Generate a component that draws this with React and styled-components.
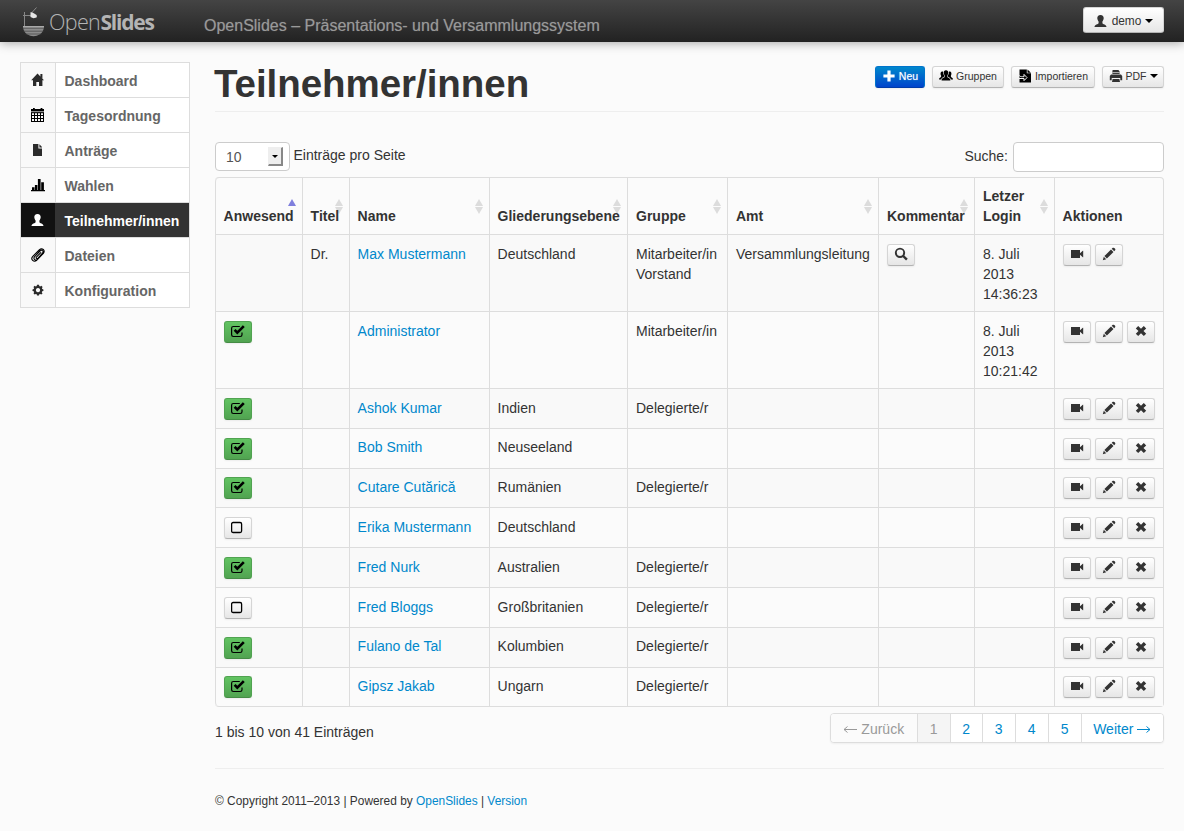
import React from "react";
import styled, { createGlobalStyle, css } from "styled-components";

const Global = createGlobalStyle`
  *, *::before, *::after { box-sizing: border-box; }
  body {
    margin: 0;
    background: #fbfbfb;
    color: #333;
    font: 14px/20px "Liberation Sans", Arial, sans-serif;
  }
  #root { overflow: hidden; height: 831px; }
`;

const Icon = styled.svg.attrs({ viewBox: "0 0 14 14" })`
  display: block;
  flex: none;
  width: 14px;
  height: 14px;
  fill: currentColor;
`;

const HomeIcon = () => (
  <Icon>
    <path d="M6.500 .4 13 7.300H11.400V13H8V9H5.300V13H2V7.300H.2Z M9.400 1h2v4.400l-2-2Z" />
  </Icon>
);
const CalendarIcon = () => (
  <Icon>
    <path fill="#000" d="M2 0h1.800v1h5.800V0h1.800v1H13v3.500H0V1h2Z" />
    <path fill="#ccc" d="M0 3h13v.7H0Z" />
    <path fill="#000" fillRule="evenodd" d="M0 4.200h13V14H0Z M1 5.200v1.900h2V5.200Z M4 5.200v1.900h2V5.200Z M7 5.200v1.900h2V5.200Z M10 5.200v1.900h2V5.200Z M1 8v2h2V8Z M4 8v2h2V8Z M7 8v2h2V8Z M10 8v2h2V8Z M1 11v2h2v-2Z M4 11v2h2v-2Z M7 11v2h2v-2Z M10 11v2h2v-2Z" />
  </Icon>
);
const FileIcon = () => (
  <Icon>
    <path d="M2 1h5.400v4.400H11V13H2Z M8.400 1.200 11 4v.4H8.400Z" />
  </Icon>
);
const ChartIcon = () => (
  <Icon>
    <path fill="#000" d="M0 12h14v1.200H0Z M1 9.200h2.500V12H1Z M3.900 7h2.500v5H3.900Z M6.900 1h2.700v11H6.900Z M10.200 4.200h2.700V12h-2.700Z" />
  </Icon>
);
const UserIcon = () => (
  <Icon>
    <path d="M6.500 1C8.700 1 9.800 2.300 9.700 4.200 9.600 5.600 9 6.700 8.400 7.500V9.200C8.700 10.300 12.500 10.400 12.500 13H.5C.5 10.400 4.300 10.300 4.600 9.200V7.500C4 6.700 3.400 5.600 3.300 4.200 3.200 2.300 4.300 1 6.500 1Z" />
  </Icon>
);
const ClipIcon = () => (
  <Icon>
    <path
      fill="none"
      stroke="#000"
      strokeWidth="1.100"
      strokeLinecap="round"
      d="M9.800 4.600 5.600 8.900c-1.200 1.300.2 2.400 1.400 1.200L11.500 5.200c1.600-2.200-.7-4-2.500-2.200L3.600 8.700c-1.800 2.200.9 4.600 3 2.600L12.400 5.300c2.400-3-1.300-6-4.200-3.300L1.800 8.300c-2.700 3.200 1 6.400 4 4"
    />
  </Icon>
);
const CogIcon = () => (
  <Icon>
    <path
      fillRule="evenodd"
      d="M6 1.800h2l.3 1.300.9.400 1.200-.7 1.200 1.300-.7 1.100.4.900 1.100.3v1.500l-1.200.4-.4.900.7 1.200-1.200 1.100-1.200-.6-.8.3-.3 1.200H6l-.3-1.200-.9-.3-1.200.6-1.100-1.200.6-1.100-.4-.9-1.200-.4V6.400l1.200-.3.4-.9-.6-1.100 1.100-1.300 1.200.7.9-.4Z M7 5a2.100 2.100 0 1 0 .010 0Z"
    />
  </Icon>
);
const PlusIcon = () => (
  <Icon>
    <path d="M5.400 1.400h3.200v4h4v3.200h-4v4H5.400v-4h-4V5.400h4Z" />
  </Icon>
);
const GroupIcon = () => (
  <Icon>
    <g fill="#000">
      <path d="M7 1.200c1.600 0 2.300 1 2.200 2.500C9.100 5 8.700 5.900 8.300 6.400v1.500c.3.900 3.100.9 3.100 3.600H2.600c0-2.700 2.800-2.700 3.100-3.600V6.400C5.300 5.900 4.900 5 4.800 3.700 4.700 2.200 5.400 1.200 7 1.200Z" />
      <path d="M3 2.500c.6-.2 1-.1 1.200.2 0 1.700.3 2.800 1 3.900v.9C4.700 8.300 2.400 8.400 2.200 10.400H0C0 8.500 1.900 8.400 2.100 7.700V6.600C1.500 5.900 1 3 3 2.500Z M11 2.500c-.6-.2-1-.1-1.200.2 0 1.700-.3 2.800-1 3.900v.9c.5.800 2.800.9 3 2.900H14c0-1.900-1.900-2-2.100-2.700V6.600C12.500 5.900 13 3 11 2.500Z" />
    </g>
  </Icon>
);
const ImportIcon = () => (
  <Icon>
    <path fill="#000" d="M1.500 .5h7.300V4.300H13V13.500H1.500Z M9.500.6 12.900 3.700H9.500Z" />
    <path
      fill="none"
      stroke="#f4f4f4"
      strokeWidth="1"
      d="M1 6.300C2 7.600 3 7.700 4.500 7.700H6V5.400L9 8.600 6 11.600V9.500H1"
    />
  </Icon>
);
const PrintIcon = () => (
  <Icon>
    <path d="M4 1h5.400L10.600 2.400V5H3.400V1.600Z M2 5.600h10l1.200 1.500V11.200H11.300V9H2.700v2.200H.8V7.100Z M3.600 10h6.800l.6 3H3Z" />
    <path stroke="#f4f4f4" strokeWidth=".7" d="M3.400 3.600h7.200" />
  </Icon>
);
const SearchIcon = () => (
  <Icon>
    <circle cx="6" cy="5.800" r="4.200" fill="none" stroke="currentColor" strokeWidth="1.900" />
    <path stroke="currentColor" strokeWidth="2.400" d="m8.700 8.500 4.200 4.200" />
  </Icon>
);
const VideoIcon = () => (
  <Icon>
    <path d="M1 3h9v8H1Z M10 6.200 12.800 3.700H13.200V10.300H12.800L10 7.800Z" />
  </Icon>
);
const PencilIcon = () => (
  <Icon>
    <path d="M.8 13.200 1.800 9.800 4.200 12.200Z M2.400 9.100 9 2.500 11.500 5 4.900 11.600Z M9.700 1.800 10.800.8Q11.600.4 12.300 1L13.100 1.800Q13.600 2.500 13.100 3.300L12.200 4.300Z" />
  </Icon>
);
const CrossIcon = () => (
  <Icon>
    <path d="M4.200 2 7 4.700 9.800 2 12.200 4.400 9.500 7 12.200 9.700 9.800 12 7 9.300 4.200 12 1.800 9.700 4.500 7 1.800 4.400Z" />
  </Icon>
);
const CheckIcon = () => (
  <Icon>
    <path
      fill="none"
      stroke="#000"
      strokeWidth="1.200"
      d="M8.800 2.500H2.300Q.600 2.500.600 4.200V10.800Q.600 12.500 2.300 12.500H9.300Q11 12.500 11 10.800V8.500"
    />
    <path fill="none" stroke="#000" strokeWidth="2.700" d="M3.600 5.900 6.300 8.600 12.800 2.100" />
  </Icon>
);
const EmptyIcon = () => (
  <Icon>
    <rect x=".600" y="2.500" width="10" height="10" rx="1.500" fill="none" stroke="#000" strokeWidth="1.300" />
  </Icon>
);

const Caret = styled.span`
  border: 4px solid transparent;
  border-top-color: #000;
  border-bottom: 0;
`;

const Header = styled.header`
  display: flex;
  height: 42px;
  padding: 7px 20px 0 22px;
  background: linear-gradient(#444, #222);
  box-shadow: 0 1px 10px rgba(0, 0, 0, 0.35);
`;
const Logo = styled.div`
  display: flex;
  width: 182px;
  color: #b4b4b4;
  font: 300 22px/30px "Open Sans", sans-serif;
  svg { margin-right: 5px; }
`;
const LogoLight = styled.span`
  width: 51.500px;
  font-size: 21.500px;
  letter-spacing: -0.650px;
`;
const LogoBold = styled.b`
  font-weight: 700;
  font-size: 21px;
  letter-spacing: -1.200px;
`;
const Slogan = styled.div`
  flex: 1;
  padding-top: 9px;
  color: #999;
  font-size: 16px;
  text-shadow: 0 0 1px rgba(153, 153, 153, 0.5);
`;

const Button = styled.button`
  display: inline-flex;
  align-items: center;
  justify-content: center;
  gap: ${(p) => p.$gap ?? 3}px;
  width: ${(p) => p.$w || 28}px;
  height: ${(p) => p.$h || 22}px;
  padding: ${(p) => (p.$h ? "1px 0 0" : "0 0 2px")};
  color: #333;
  font: ${(p) => p.$size || 10.5}px/18px "Liberation Sans", Arial, sans-serif;
  border: 1px solid #d5d5d5;
  border-bottom-color: #b3b3b3;
  border-radius: 3px;
  background: linear-gradient(#fff, #e6e6e6);
  box-shadow: 0 1px 2px rgba(0, 0, 0, 0.06);
  ${(p) => p.$tone === "green" && css`
    border-color: #51a351;
    border-bottom-color: #458c45;
    background: linear-gradient(#62c462, #51a351);
  `}
  ${(p) => p.$tone === "blue" && css`
    color: #fff;
    border-color: #0074cc;
    border-bottom-color: #003ba8;
    background: linear-gradient(#0088cc, #0044cc);
    text-shadow: 0 0 1px rgba(255, 255, 255, 0.6);
  `}
`;

const Layout = styled.div`
  display: flex;
  align-items: flex-start;
  gap: 25px;
  padding: 20px 20px 0;
`;
const Nav = styled.nav`
  width: 170px;
  border: 1px solid #ddd;
  border-top: 0;
`;
const NavItem = styled.a`
  display: flex;
  height: 35px;
  border-top: 1px solid #ddd;
  font-weight: bold;
  color: ${(p) => (p.$active ? "#fff" : "#666")};
  background: ${(p) => (p.$active ? "#333" : "#fff")};
`;
const NavIcon = styled.span`
  display: flex;
  align-items: center;
  justify-content: center;
  width: 35px;
  border-right: 1px solid ${(p) => (p.$active ? "#333" : "#ddd")};
  color: ${(p) => (p.$active ? "#fff" : "#2b2b2b")};
  background: ${(p) => (p.$active ? "#111" : "#f9f9f9")};
`;
const NavLabel = styled.span`
  padding: 8px 0 0 8.500px;
`;

const Main = styled.main`
  width: 949px;
`;
const TitleBar = styled.div`
  display: flex;
  justify-content: space-between;
  height: 50px;
  border-bottom: 1px solid #eee;
`;
const Title = styled.h1`
  margin: 2px 0 0 -1px;
  font-size: 38.500px;
  line-height: 40px;
  letter-spacing: -0.050px;
  color: #333;
`;
const Actions = styled.div`
  display: flex;
  gap: 7px;
  padding-top: 4px;
`;
const Filters = styled.div`
  display: flex;
  height: 65px;
  padding-top: 30px;
`;
const LengthBox = styled.div`
  display: flex;
  justify-content: space-between;
  width: 75px;
  height: 29px;
  margin-right: 3.500px;
  padding: 4px 6px 0 10px;
  border: 1px solid #ccc;
  border-radius: 4px;
  background: #fff;
  color: #555;
  line-height: 20px;
`;
const Drop = styled.span`
  display: flex;
  align-items: center;
  justify-content: center;
  width: 15px;
  height: 19px;
  border: 1px solid #eee;
  border-right: 2px solid #888;
  border-bottom: 2px solid #888;
  background: #eee;
  ${Caret} { border-width: 3.500px 3.500px 0; }
`;
const FilterLabel = styled.span`
  margin-top: 3px;
`;
const Search = styled.label`
  display: flex;
  gap: 5px;
  margin-left: auto;
`;
const SearchLabel = styled.span`
  margin-top: 4px;
`;
const SearchInput = styled.input`
  width: 151px;
  height: 30px;
  border: 1px solid #ccc;
  border-radius: 4px;
  background: #fff;
`;

const Table = styled.table`
  width: 949px;
  table-layout: fixed;
  border-collapse: separate;
  border-spacing: 0;
  border: 1px solid #ddd;
  border-left: 0;
  border-radius: 4px;
`;
const Col = styled.col`
  width: ${(p) => p.$w}px;
`;
const Th = styled.th`
  position: relative;
  height: 56px;
  padding: 8px 0 8px ${(p) => p.$left ?? 7.6}px;
  border-left: 1px solid #ddd;
  text-align: left;
  vertical-align: bottom;
  white-space: pre;
  &:first-child { border-top-left-radius: 4px; }
  span { position: relative; }
`;
const Sort = styled.svg.attrs({ viewBox: "0 0 8 15" })`
  position: absolute;
  right: 6px;
  top: 21px;
  width: 8px;
  height: 15px;
`;
const Row = styled.tr`
  height: ${(p) => p.$h}px;
  background: ${(p) => (p.$odd ? "#f9f9f9" : "#fbfbfb")};
  &:last-child td:first-child { border-bottom-left-radius: 4px; }
`;
const Td = styled.td`
  height: ${(p) => p.$h}px;
  padding: ${(p) => p.$top}px 0 0 ${(p) => p.$left ?? 7.6}px;
  border-top: 1px solid #ddd;
  border-left: 1px solid #ddd;
  vertical-align: top;
  white-space: pre;
`;
const ButtonGroup = styled.div`
  display: flex;
  gap: 4px;
`;
const Link = styled.a`
  color: #0088cc;
`;

const Summary = styled.div`
  display: flex;
  justify-content: space-between;
  height: 62px;
  padding-top: 6px;
  border-bottom: 1px solid #eee;
`;
const Info = styled.span`
  padding-top: 9px;
`;
const Pager = styled.div`
  display: flex;
  height: 30px;
  border: 1px solid #ddd;
  border-radius: 4px;
  overflow: hidden;
  background: #fff;
  box-shadow: 0 1px 2px rgba(0, 0, 0, 0.05);
`;
const Page = styled.a`
  display: flex;
  align-items: center;
  justify-content: center;
  width: ${(p) => p.$w}px;
  padding: 2px 0.500px 0 0;
  color: ${(p) => (p.$muted ? "#999" : "#0088cc")};
  background: ${(p) => p.$bg || "#fff"};
  border-left: 1px solid #ddd;
  gap: 4px;
  &:first-child { border-left: 0; }
`;
const Arrow = styled.svg.attrs({ viewBox: "0 0 14 8" })`
  width: 14px;
  height: 8px;
  fill: none;
  stroke: currentColor;
`;
const Footer = styled.footer`
  padding-top: 22px;
  font-size: 11.900px;
  letter-spacing: 0.010px;
`;

const navigation = [
  ["Dashboard", HomeIcon],
  ["Tagesordnung", CalendarIcon],
  ["Anträge", FileIcon],
  ["Wahlen", ChartIcon],
  ["Teilnehmer/innen", UserIcon],
  ["Dateien", ClipIcon],
  ["Konfiguration", CogIcon],
];

const columns = [
  { title: "Anwesend", width: 87, sort: "asc" },
  { title: "Titel", width: 47, sort: "both" },
  { title: "Name", width: 140, sort: "both" },
  { title: "Gliederungsebene", width: 138, sort: "both" },
  { title: "Gruppe", width: 100, sort: "both", left: 8 },
  { title: "Amt", width: 151, sort: "both", left: 8 },
  { title: "Kommentar", width: 96, sort: "both", left: 8 },
  { title: "Letzer\nLogin", width: 80, sort: "both", left: 8 },
  { title: "Aktionen", width: 109 },
];

const people = [
  { h: 77, title: "Dr.", name: "Max Mustermann", level: "Deutschland", group: "Mitarbeiter/in\nVorstand", office: "Versammlungsleitung", comment: true, login: "8. Juli\n2013\n14:36:23", self: true },
  { h: 77, present: true, name: "Administrator", group: "Mitarbeiter/in", login: "8. Juli\n2013\n10:21:42" },
  { h: 40, present: true, name: "Ashok Kumar", level: "Indien", group: "Delegierte/r" },
  { h: 40, text: 8, present: true, name: "Bob Smith", level: "Neuseeland" },
  { h: 39, text: 8, button: 8, present: true, name: "Cutare Cutărică", level: "Rumänien", group: "Delegierte/r" },
  { h: 40, present: false, name: "Erika Mustermann", level: "Deutschland" },
  { h: 40, present: true, name: "Fred Nurk", level: "Australien", group: "Delegierte/r" },
  { h: 40, present: false, name: "Fred Bloggs", level: "Großbritanien", group: "Delegierte/r" },
  { h: 40, text: 8, present: true, name: "Fulano de Tal", level: "Kolumbien", group: "Delegierte/r" },
  { h: 39, text: 8, button: 8, present: true, name: "Gipsz Jakab", level: "Ungarn", group: "Delegierte/r" },
];

function BrandMark() {
  return (
    <svg width="22" height="30" viewBox="0 0 22 30">
      <path d="M2.500 5v14M1 8.500h8.500M9.500 6 14.500.500" stroke="#888" strokeWidth="1" fill="none" />
      <path d="M8.500 5.200Q11.500 5 15 8.800L14.500 10.500 11.500 11.300 8.500 10Z" fill="#e6e6e6" />
      <path d="M1 19H22Q21.800 24.500 18 27.300 11.500 31 5 27.300 1.200 24.500 1 19Z" fill="#8c8c8c" />
      <path d="M1 19h21v1.500H1Z" fill="#aaa" />
      <path d="M1 21.200h21M1.500 24.200h20M3.500 27h16" stroke="#444" strokeWidth=".7" />
    </svg>
  );
}

function Person({ person, index }) {
  const { h, text = 9, button = 9 } = person;
  return (
    <Row $h={h} $odd={index % 2 === 0}>
      <Td $h={h} $top={button} $left={8}>
        {person.present !== undefined && (
          <Button $tone={person.present ? "green" : undefined}>
            {person.present ? <CheckIcon /> : <EmptyIcon />}
          </Button>
        )}
      </Td>
      <Td $h={h} $top={text}>{person.title}</Td>
      <Td $h={h} $top={text}><Link>{person.name}</Link></Td>
      <Td $h={h} $top={text}>{person.level}</Td>
      <Td $h={h} $top={text} $left={8}>{person.group}</Td>
      <Td $h={h} $top={text} $left={8}>{person.office}</Td>
      <Td $h={h} $top={button} $left={8}>{person.comment && <Button><SearchIcon /></Button>}</Td>
      <Td $h={h} $top={text} $left={8}>{person.login}</Td>
      <Td $h={h} $top={button} $left={8}>
        <ButtonGroup>
          <Button><VideoIcon /></Button>
          <Button><PencilIcon /></Button>
          {!person.self && <Button><CrossIcon /></Button>}
        </ButtonGroup>
      </Td>
    </Row>
  );
}

export default function App() {
  return (
    <>
      <Global />
      <Header>
        <Logo>
          <BrandMark />
          <LogoLight>Open</LogoLight>
          <LogoBold>Slides</LogoBold>
        </Logo>
        <Slogan>OpenSlides – Präsentations- und Versammlungssystem</Slogan>
        <Button $w={81} $h={26} $size={11.9} $gap={4}>
          <UserIcon /> demo <Caret />
        </Button>
      </Header>
      <Layout>
        <Nav>
          {navigation.map(([label, Glyph]) => {
            const active = label === "Teilnehmer/innen";
            return (
              <NavItem key={label} $active={active}>
                <NavIcon $active={active}><Glyph /></NavIcon>
                <NavLabel>{label}</NavLabel>
              </NavItem>
            );
          })}
        </Nav>
        <Main>
          <TitleBar>
            <Title>Teilnehmer/innen</Title>
            <Actions>
              <Button $w={50} $tone="blue"><PlusIcon /> Neu</Button>
              <Button $w={72}><GroupIcon /> Gruppen</Button>
              <Button $w={84}><ImportIcon /> Importieren</Button>
              <Button $w={62}><PrintIcon /> PDF <Caret /></Button>
            </Actions>
          </TitleBar>
          <Filters>
            <LengthBox>10 <Drop><Caret /></Drop></LengthBox>
            <FilterLabel>Einträge pro Seite</FilterLabel>
            <Search>
              <SearchLabel>Suche:</SearchLabel>
              <SearchInput />
            </Search>
          </Filters>
          <Table>
            <colgroup>
              {columns.map((c) => <Col key={c.title} $w={c.width} />)}
            </colgroup>
            <thead>
              <tr>
                {columns.map((c) => (
                  <Th key={c.title} $left={c.left}>
                    {c.sort && (
                      <Sort>
                        <path d="M4 0 8 7H0Z" fill={c.sort === "asc" ? "#7f7fdd" : "#dcdcdc"} />
                        {c.sort === "both" && <path d="M0 8h8L4 15Z" fill="#dcdcdc" />}
                      </Sort>
                    )}
                    <span>{c.title}</span>
                  </Th>
                ))}
              </tr>
            </thead>
            <tbody>
              {people.map((p, i) => <Person key={p.name} person={p} index={i} />)}
            </tbody>
          </Table>
          <Summary>
            <Info>1 bis 10 von 41 Einträgen</Info>
            <Pager>
              <Page $w={86} $muted $bg="#fbfbfb">
                <Arrow><path d="M14 4.500H1M4.500 1.500 1 4.500 4.500 7.500" /></Arrow>Zurück
              </Page>
              <Page $w={33} $muted $bg="#f5f5f5">1</Page>
              <Page $w={32}>2</Page>
              <Page $w={33}>3</Page>
              <Page $w={33}>4</Page>
              <Page $w={33}>5</Page>
              <Page $w={82}>
                Weiter<Arrow><path d="M0 4.500H13M9.500 1.500 13 4.500 9.500 7.500" /></Arrow>
              </Page>
            </Pager>
          </Summary>
          <Footer>
            © Copyright 2011–2013 | Powered by <Link>OpenSlides</Link> | <Link>Version</Link>
          </Footer>
        </Main>
      </Layout>
    </>
  );
}
